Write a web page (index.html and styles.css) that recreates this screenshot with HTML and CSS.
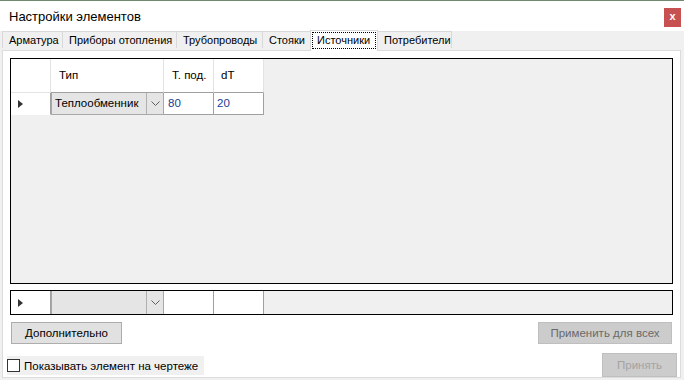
FILE: index.html
```html
<!DOCTYPE html>
<html lang="ru">
<head>
<meta charset="utf-8">
<link rel="stylesheet" href="styles.css">
</head>
<body>
<div class="window">
  <div class="titlebar">
    <span class="title">Настройки элементов</span>
    <span class="close">x</span>
  </div>
  <div class="body">
    <div class="tabs">
      <div class="tab t1">Арматура</div>
      <div class="tab t2">Приборы отопления</div>
      <div class="tab t3">Трубопроводы</div>
      <div class="tab t4">Стояки</div>
      <div class="tab sel t5"><span class="focus">Источники</span></div>
      <div class="tab t6">Потребители</div>
    </div>
    <div class="panel">
      <div class="grid main">
        <div class="row head">
          <div class="c rh"></div>
          <div class="c ctype">Тип</div>
          <div class="c cnum">Т. под.</div>
          <div class="c cnum">dT</div>
        </div>
        <div class="row data">
          <div class="c rh"><span class="arrow"></span></div>
          <div class="c ctype combo"><span class="ctext">Теплообменник</span><span class="drop"><svg width="9" height="5" viewBox="0 0 9 5"><path d="M0.5 0.5 L4.5 4.5 L8.5 0.5" fill="none" stroke="#606060" stroke-width="1"/></svg></span></div>
          <div class="c cnum val">80</div>
          <div class="c cnum val">20</div>
        </div>
      </div>
      <div class="grid newrow">
        <div class="row data">
          <div class="c rh"><span class="arrow"></span></div>
          <div class="c ctype combo"><span class="ctext"></span><span class="drop"><svg width="9" height="5" viewBox="0 0 9 5"><path d="M0.5 0.5 L4.5 4.5 L8.5 0.5" fill="none" stroke="#606060" stroke-width="1"/></svg></span></div>
          <div class="c cnum val"></div>
          <div class="c cnum val"></div>
        </div>
      </div>
      <div class="btnrow">
        <button class="btn extra">Дополнительно</button>
        <button class="btn dis1">Применить для всех</button>
      </div>
      <div class="bottomrow">
        <label class="check"><span class="box"></span><span>Показывать элемент на чертеже</span></label>
        <button class="btn accept">Принять</button>
      </div>
    </div>
  </div>
</div>
</body>
</html>
```

FILE: styles.css
```css
* { box-sizing: border-box; }
html, body { margin: 0; padding: 0; }
body {
  width: 684px;
  height: 380px;
  overflow: hidden;
  font-family: "Liberation Sans", Arial, sans-serif;
  font-size: 11.5px;
  color: #000;
  background: #f0f0f0;
}
.window {
  width: 684px;
  height: 380px;
  border-top: 1px solid #6f8a6c;
  display: flex;
  flex-direction: column;
}
.titlebar {
  height: 30px;
  background: #fff;
  display: flex;
  align-items: flex-start;
  justify-content: space-between;
}
.title {
  font-size: 13px;
  margin-left: 9px;
  margin-top: 8px;
}
.close {
  width: 17px;
  height: 19px;
  margin-top: 7px;
  margin-right: 3px;
  background: #c75050;
  color: #fff;
  font-weight: bold;
  font-size: 11px;
  line-height: 17px;
  text-align: center;
}
.body {
  flex: 1;
  display: flex;
  flex-direction: column;
  padding-left: 2px;
  padding-right: 3px;
}
.tabs {
  height: 19px;
  display: flex;
  align-items: flex-end;
  position: relative;
  z-index: 1;
  font-size: 11px;
}
.tab {
  flex: none;
  height: 17px;
  margin-bottom: 2px;
  border: 1px solid #d9d9d9;
  border-bottom: none;
  border-right: none;
  background: #f0f0f0;
  padding-left: 6px;
  line-height: 16px;
  white-space: nowrap;
  overflow: hidden;
}
.t1 { width: 60px; }
.t2 { width: 114px; }
.t3 { width: 86px; }
.t4 { width: 48px; }
.t5 { width: 68px; }
.t6 { width: 74px; border-right: 1px solid #d9d9d9; }
.tab.sel {
  height: 21px;
  margin-bottom: -1px;
  background: #fff;
  border-color: #d9d9d9;
  border-right: 1px solid #d9d9d9;
  padding: 1px 1px 2px 1px;
}
.tab.sel + .tab { border-left: none; }
.focus {
  display: block;
  height: 17px;
  border: 1px dotted #000;
  padding-left: 4px;
  line-height: 15px;
}
.panel {
  height: 328px;
  border: 1px solid #dcdcdc;
  background: #fff;
  padding: 7px 7px 0 7px;
  display: flex;
  flex-direction: column;
}
.grid {
  border: 1px solid #000;
  background: #f0f0f0;
}
.grid.main { height: 226px; }
.grid.newrow { height: 25px; margin-top: 6px; }
.row { display: flex; }
.c {
  flex: none;
  border-right: 1px solid #a0a0a0;
  border-bottom: 1px solid #a0a0a0;
  background: #fff;
  white-space: nowrap;
}
.rh { width: 40px; }
.ctype { width: 113px; }
.cnum { width: 50px; }
.head .c {
  height: 34px;
  line-height: 32px;
  padding-left: 8px;
  border-right-color: #e3e3e3;
}
.head .rh { border-bottom-color: #e3e3e3; }
.head .cnum:last-child { padding-left: 7px; }
.data .c { height: 22px; }
.newrow .data .c { height: 23px; border-bottom: none; }
.data .rh {
  border-bottom-color: #fff;
  border-right-color: #a0a0a0;
  display: flex;
  align-items: center;
  padding-left: 7px;
}
.arrow {
  width: 0;
  height: 0;
  border-top: 4px solid transparent;
  border-bottom: 4px solid transparent;
  border-left: 5px solid #333;
}
.val {
  padding-left: 3px;
  line-height: 21px;
  color: #1a3c94;
}
.data .cnum:nth-child(3) { padding-left: 4px; }
.combo {
  display: flex;
  background: #e5e5e5;
  border: 1px solid #a8a8a8;
  border-top: none;
}
.combo .ctext {
  flex: 1;
  padding-left: 3px;
  line-height: 20px;
}
.combo .drop {
  width: 17px;
  border-left: 1px solid #b0b0b0;
  display: flex;
  align-items: center;
  justify-content: center;
}
.newrow .combo { border-top: none; border-bottom: 1px solid #a8a8a8; height: 23px; }
.btnrow {
  display: flex;
  justify-content: space-between;
  margin-top: 7px;
  padding-left: 1px;
  padding-right: 1px;
}
.btn {
  font-family: inherit;
  font-size: 11.5px;
  height: 22px;
  padding: 0;
  margin: 0;
  border: 1px solid #adadad;
  background: #e1e1e1;
  color: #000;
}
.extra { width: 111px; }
.dis1 {
  width: 134px;
  background: #cccccc;
  border-color: #bfbfbf;
  color: #6a6a6a;
}
.bottomrow {
  display: flex;
  justify-content: space-between;
  align-items: flex-start;
  margin-top: 9px;
  margin-left: -3px;
  margin-right: -4px;
}
.check {
  display: flex;
  align-items: center;
  width: 197px;
  height: 19px;
  margin-top: 3px;
  background: #f0f0f0;
  white-space: nowrap;
}
.box {
  flex: none;
  width: 13px;
  height: 13px;
  border: 1px solid #333;
  background: #fff;
  margin-right: 4px;
}
.accept {
  width: 75px;
  height: 24px;
  background: #cccccc;
  border-color: #bfbfbf;
  color: #a3a3a3;
}
```
